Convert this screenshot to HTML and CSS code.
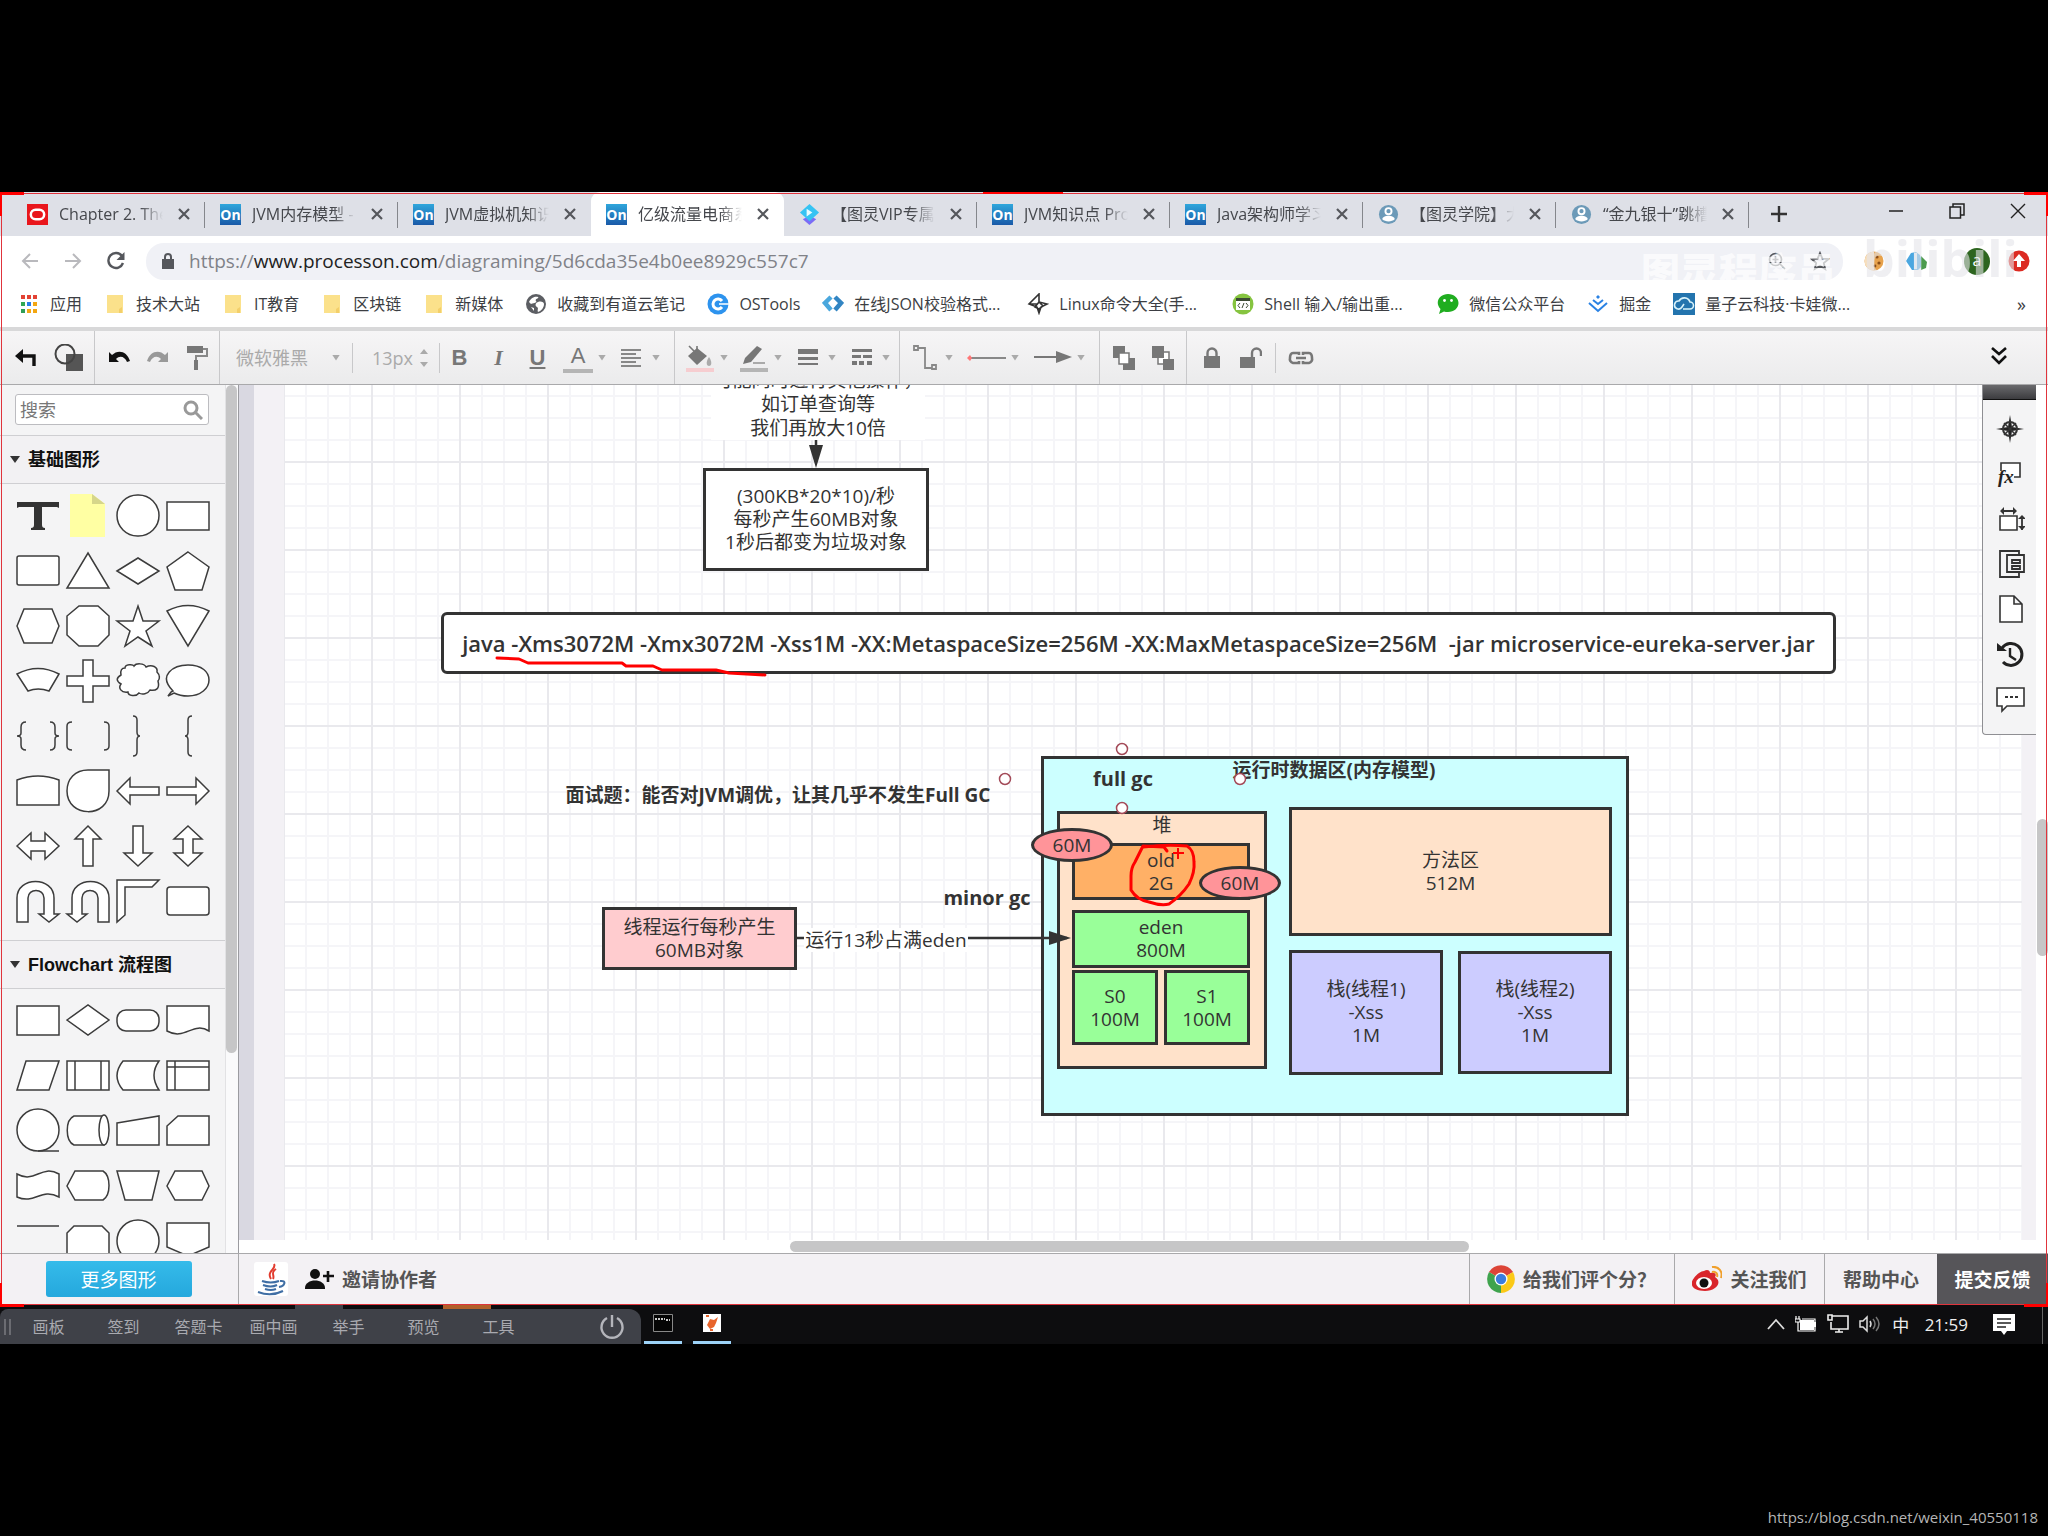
FILE: index.html
```html
<!DOCTYPE html>
<html lang="zh-CN">
<head>
<meta charset="utf-8">
<title>ProcessOn</title>
<link rel="stylesheet" href="styles.css">
</head>
<body>
<div class="desktop">
  <header class="tabs">
    <div class="tab sep"><svg class="fav" viewBox="0 0 22 22"><rect width="22" height="22" fill="#e9161c"/><rect x="4" y="6" width="14" height="10" rx="5" fill="none" stroke="#fff" stroke-width="2.6"/></svg><span class="title">Chapter 2. The</span><button class="x" aria-label="关闭"><svg width="14" height="14" viewBox="0 0 14 14"><path d="M2 2l10 10M12 2L2 12"/></svg></button></div>
    <div class="tab sep"><span class="fav on">On</span><span class="title">JVM内存模型 -</span><button class="x" aria-label="关闭"><svg width="14" height="14" viewBox="0 0 14 14"><path d="M2 2l10 10M12 2L2 12"/></svg></button></div>
    <div class="tab"><span class="fav on">On</span><span class="title">JVM虚拟机知识</span><button class="x" aria-label="关闭"><svg width="14" height="14" viewBox="0 0 14 14"><path d="M2 2l10 10M12 2L2 12"/></svg></button></div>
    <div class="tab active"><span class="fav on">On</span><span class="title">亿级流量电商系</span><button class="x" aria-label="关闭"><svg width="14" height="14" viewBox="0 0 14 14"><path d="M2 2l10 10M12 2L2 12"/></svg></button></div>
    <div class="tab sep"><svg class="fav" viewBox="0 0 22 22"><path d="M11 12l7 4-7 6-7-6z" fill="#7b6cf6"/><path d="M11 0l10 9-10 9L1 9z" fill="#35c3f3"/><path d="M8 5l6 4-6 4z" fill="#e8fbff"/></svg><span class="title">【图灵VIP专属</span><button class="x" aria-label="关闭"><svg width="14" height="14" viewBox="0 0 14 14"><path d="M2 2l10 10M12 2L2 12"/></svg></button></div>
    <div class="tab sep"><span class="fav on">On</span><span class="title">JVM知识点 Pro</span><button class="x" aria-label="关闭"><svg width="14" height="14" viewBox="0 0 14 14"><path d="M2 2l10 10M12 2L2 12"/></svg></button></div>
    <div class="tab sep"><span class="fav on">On</span><span class="title">Java架构师学习</span><button class="x" aria-label="关闭"><svg width="14" height="14" viewBox="0 0 14 14"><path d="M2 2l10 10M12 2L2 12"/></svg></button></div>
    <div class="tab sep"><svg class="fav" viewBox="0 0 22 22"><circle cx="11" cy="11" r="10" fill="#6c9ab8"/><circle cx="11" cy="7.500" r="3.200" fill="none" stroke="#fff" stroke-width="2"/><path d="M4.500 16c0-5 13-5 13 0-3 3-10 3-13 0z" fill="#fff"/></svg><span class="title">【图灵学院】大</span><button class="x" aria-label="关闭"><svg width="14" height="14" viewBox="0 0 14 14"><path d="M2 2l10 10M12 2L2 12"/></svg></button></div>
    <div class="tab sep"><svg class="fav" viewBox="0 0 22 22"><circle cx="11" cy="11" r="10" fill="#6c9ab8"/><circle cx="11" cy="7.500" r="3.200" fill="none" stroke="#fff" stroke-width="2"/><path d="M4.500 16c0-5 13-5 13 0-3 3-10 3-13 0z" fill="#fff"/></svg><span class="title">“金九银十”跳槽</span><button class="x" aria-label="关闭"><svg width="14" height="14" viewBox="0 0 14 14"><path d="M2 2l10 10M12 2L2 12"/></svg></button></div>
    <button class="plus" aria-label="新标签页"><svg width="18" height="18" viewBox="0 0 18 18"><path d="M9 1v16M1 9h16" stroke="#333" stroke-width="2.400"/></svg></button>
    <div class="winctl">
      <button aria-label="最小化"><svg width="16" height="16" viewBox="0 0 16 16"><path d="M1 8h14" stroke="#222" stroke-width="1.500"/></svg></button>
      <button aria-label="还原"><svg width="16" height="16" viewBox="0 0 16 16" fill="none" stroke="#222" stroke-width="1.500"><path d="M1 4h10.500v11H1zM4 4V1h11v11h-3"/></svg></button>
      <button aria-label="关闭窗口"><svg width="16" height="16" viewBox="0 0 16 16"><path d="M1 1l14 14M15 1L1 15" stroke="#222" stroke-width="1.400"/></svg></button>
    </div>
  </header>

  <nav class="address">
    <button class="nav" aria-label="后退"><svg width="18" height="18" viewBox="0 0 18 18" fill="none" stroke="#b9b9bd" stroke-width="2"><path d="M17 9H2M9 2L2 9l7 7"/></svg></button>
    <button class="nav" aria-label="前进"><svg width="18" height="18" viewBox="0 0 18 18" fill="none" stroke="#b9b9bd" stroke-width="2"><path d="M1 9h15M9 2l7 7-7 7"/></svg></button>
    <button class="nav" aria-label="刷新"><svg width="20" height="20" viewBox="0 0 20 20"><path d="M17 12a7.500 7.500 0 1 1-1-7" fill="none" stroke="#55575c" stroke-width="2.400"/><path d="M18.500 1v8h-8z" fill="#55575c"/></svg></button>
    <div class="pill">
      <svg width="12" height="16" viewBox="0 0 12 16"><path d="M0 6h12v10H0z" fill="#55575c"/><path d="M3 7V4a3 3 0 0 1 6 0v3" fill="none" stroke="#55575c" stroke-width="2"/></svg>
      <span class="url">https://<b>www.processon.com</b>/diagraming/5d6cda35e4b0ee8929c557c7</span>
      <svg class="mag" width="18" height="18" viewBox="0 0 18 18" fill="none" stroke="#55575c" stroke-width="1.700"><circle cx="7.500" cy="7.500" r="6"/><path d="M12 12l5 5M4.500 7.500h6M7.500 4.500v6"/></svg>
      <svg width="20" height="20" viewBox="0 0 20 20" fill="none" stroke="#55575c" stroke-width="1.800"><path d="M10 2l2.400 5.600 6 .5-4.600 4 1.400 6-5.200-3.200L4.800 18l1.400-6-4.600-4 6-.4z"/></svg>
      <span class="ghost">图灵程序员</span>
    </div>
    <div class="ext">
      <svg width="20" height="20" viewBox="0 0 20 20"><circle cx="10" cy="10" r="9.500" fill="#e7a24c"/><path d="M10 .5a9.500 9.500 0 0 0 0 19z" fill="#f7dfbd"/><circle cx="13" cy="6" r="1.600" fill="#8b4d16"/><circle cx="15" cy="12" r="1.600" fill="#8b4d16"/><circle cx="11" cy="15" r="1.400" fill="#8b4d16"/></svg>
      <svg width="22" height="20" viewBox="0 0 22 20"><path d="M0 10l5-8 5-1 4 3 3 10-5 5H6z" fill="#4ba7e0"/><path d="M8 2h3v16H8z" fill="#dff0fa"/><path d="M15 5l6 6-1 6-5 2z" fill="#4c9b4e"/></svg>
      <span class="avatar">a</span>
      <svg width="22" height="22" viewBox="0 0 22 22"><circle cx="11" cy="11" r="10.500" fill="#dc2a22"/><path d="M11 4l6 7h-4v6H9v-6H5z" fill="#fff"/></svg>
      <span class="bili">bilibili</span>
    </div>
  </nav>

  <nav class="marks">
    <a href="#"><svg width="22" height="22" viewBox="0 0 22 22"><path d="M3 2h4v4H3zM9 2h4v4H9zM15 2h4v4h-4z" fill="#e34234"/><path d="M3 9h4v4H3z" fill="#34a853"/><path d="M9 9h4v4H9z" fill="#2b7de9"/><path d="M15 9h4v4h-4zM9 16h4v4H9zM15 16h4v4h-4z" fill="#f3a712"/><path d="M3 16h4v4H3z" fill="#2f9e57"/></svg>应用</a>
    <a href="#"><svg width="22" height="22" viewBox="0 0 22 22"><path class="folder" d="M3 2h16v18H3z"/><path d="M15 20v-4l3-2v6z" fill="#f3cf6a"/></svg>技术大站</a>
    <a href="#"><svg width="22" height="22" viewBox="0 0 22 22"><path class="folder" d="M3 2h16v18H3z"/><path d="M15 20v-4l3-2v6z" fill="#f3cf6a"/></svg>IT教育</a>
    <a href="#"><svg width="22" height="22" viewBox="0 0 22 22"><path class="folder" d="M3 2h16v18H3z"/><path d="M15 20v-4l3-2v6z" fill="#f3cf6a"/></svg>区块链</a>
    <a href="#"><svg width="22" height="22" viewBox="0 0 22 22"><path class="folder" d="M3 2h16v18H3z"/><path d="M15 20v-4l3-2v6z" fill="#f3cf6a"/></svg>新媒体</a>
    <a href="#"><svg width="22" height="22" viewBox="0 0 22 22"><circle cx="11" cy="11" r="10" fill="#5c5e63"/><path d="M4 9c2-5 7-6 9-5s-4 2-2 4-4 2-5 3zM13 9c3-1 6 0 6 2 0 4-3 7-6 8-1-2 1-4-1-5s-2-4 1-5zM6 14l3 1v3z" fill="#fff"/></svg>收藏到有道云笔记</a>
    <a href="#"><svg width="22" height="22" viewBox="0 0 22 22"><circle cx="11" cy="11" r="10.500" fill="#2d93ee"/><path d="M15 8a5 5 0 1 0 0 6" fill="none" stroke="#fff" stroke-width="3"/><path d="M12 11h10" stroke="#fff" stroke-width="1.500"/></svg>OSTools</a>
    <a href="#"><svg width="22" height="22" viewBox="0 0 22 22" fill="none" stroke-width="4.500"><path d="M9 4l-6 6 6 7" stroke="#4aa7dd"/><path d="M13 4l6 6-6 7" stroke="#3285c3"/></svg><span class="long">在线JSON校验格式...</span></a>
    <a href="#"><svg width="22" height="22" viewBox="0 0 22 22" fill="none" stroke="#333" stroke-width="1.600"><path d="M12 1v8l8 2-6 3-2 6-2-6-8-3zM2 11h9M12 9l-4 5 4 2 4-3z"/></svg><span class="long">Linux命令大全(手...</span></a>
    <a href="#"><svg width="22" height="22" viewBox="0 0 22 22"><circle cx="11" cy="11" r="10.500" fill="#86c440"/><path d="M4 6h14v11H4z" fill="#fff"/><path d="M4 5h14v3H4z" fill="#3c4a34"/><path d="M8 10l-2 2.500L8 15M14 10l2 2.500-2 2.500M12 10l-2 5" stroke="#3c4a34" fill="none"/></svg><span class="long">Shell 输入/输出重...</span></a>
    <a href="#"><svg width="22" height="22" viewBox="0 0 22 22"><path d="M11 1c6 0 10.500 4 10.500 9S17 19 11 19c-1.500 0-3 0-4-.500L2 21l1.500-5C-3 9 3 1 11 1z" fill="#20ad20"/><circle cx="7.500" cy="7.500" r="1.400" fill="#fff"/><circle cx="14.500" cy="7.500" r="1.400" fill="#fff"/></svg>微信公众平台</a>
    <a href="#"><svg width="22" height="22" viewBox="0 0 22 22" fill="none" stroke="#2a82e4" stroke-width="2"><path d="M2 10l9 8 9-8M6 7l5 4 5-4"/><path d="M11 2l2 2-2 2-2-2z" fill="#2a82e4" stroke="none"/></svg>掘金</a>
    <a href="#"><svg width="22" height="22" viewBox="0 0 22 22"><path d="M0 0h22v22H0z" fill="#2374ae"/><path d="M10 16h7a3.500 3.500 0 0 0 0-7 6 6 0 0 0-11-1 4 4 0 1 0 3 6l2-3" fill="none" stroke="#d8f3fb" stroke-width="1.600"/></svg>量子云科技·卡娃微...</a>
    <button class="more" aria-label="更多书签">»</button>
  </nav>

  <div class="toolbar">
    <div class="group g1">
      <button aria-label="返回"><svg width="22" height="20" viewBox="0 0 22 20"><path d="M7 8h12v10" fill="none" stroke="#111" stroke-width="3.400"/><path d="M0 8l8-7v14z" fill="#111"/></svg></button>
      <button aria-label="图形"><svg width="30" height="28" viewBox="0 0 30 28"><path d="M12 10h17v17H12z" fill="#555"/><circle cx="11" cy="10" r="9.500" fill="none" stroke="#444" stroke-width="2"/></svg></button>
    </div>
    <div class="group g2">
      <button aria-label="撤销"><svg width="24" height="18" viewBox="0 0 24 18"><path d="M2 3v10h10L9 10c4-4 9-2 11 3l3-1C20 2 11 0 5 6z" fill="#111"/></svg></button>
      <button aria-label="重做"><svg width="24" height="18" viewBox="0 0 24 18"><path d="M22 3v10H12l3-3c-4-4-9-2-11 3l-3-1C4 2 13 0 19 6z" fill="#999"/></svg></button>
      <button aria-label="格式刷"><svg width="22" height="26" viewBox="0 0 22 26"><path d="M1 1h16v7H1z" fill="#777"/><path d="M17 4h4v7H10v5" fill="none" stroke="#888" stroke-width="2"/><path d="M8 15h4v10H8z" fill="#777"/></svg></button>
    </div>
    <div class="group g3">
      <span class="fontbox"><select aria-label="字体"><option>微软雅黑</option></select><i class="caret"></i></span>
      <span class="sizebox"><input type="text" value="13px" aria-label="字号"><svg width="8" height="20" viewBox="0 0 8 20"><path d="M4 1l4 5H0zM4 19l4-5H0z" fill="#aaa"/></svg></span>
      <button class="bold" aria-label="粗体">B</button>
      <button class="ital" aria-label="斜体">I</button>
      <button class="undl" aria-label="下划线">U</button>
      <button class="drop" aria-label="文字颜色"><span class="colour">A</span><i class="caret"></i></button>
      <button class="drop" aria-label="对齐"><svg width="30" height="30" viewBox="0 0 30 30" stroke="#888" stroke-width="2.200"><path d="M4 7h20M4 11h15M4 15h20M4 19h15M4 23h20"/></svg><i class="caret"></i></button>
    </div>
    <div class="group">
      <button class="drop" aria-label="填充"><svg width="30" height="30" viewBox="0 0 30 30"><path d="M3 13l9-8 10 8-10 9z" fill="#777"/><path d="M4 3l8 8V3" fill="none" stroke="#777" stroke-width="1.600"/><path d="M24 14c4 6 2 9 0 9s-4-3 0-9z" fill="#aaa"/><path d="M1 25h28v4H1z" fill="#f6cdd0"/></svg><i class="caret"></i></button>
      <button class="drop" aria-label="线条颜色"><svg width="30" height="30" viewBox="0 0 30 30"><path d="M4 21l2-6L18 3l5 3-11 13z" fill="#777"/><path d="M14 20h12" stroke="#aaa" stroke-width="2"/><path d="M1 25h28v4H1z" fill="#b5b5b5"/></svg><i class="caret"></i></button>
      <button class="drop" aria-label="线宽"><svg width="30" height="30" viewBox="0 0 30 30" fill="#777"><path d="M5 6h20v5H5zM5 14h20v3H5zM5 20h20v2H5z"/></svg><i class="caret"></i></button>
      <button class="drop" aria-label="线型"><svg width="30" height="30" viewBox="0 0 30 30" fill="#777"><path d="M5 6h20v3H5zM5 12h9v3H5zM16 12h9v3h-9zM5 18h5v4H5zM12 18h5v4h-5zM20 18h5v4h-5z"/></svg><i class="caret"></i></button>
    </div>
    <div class="group g5">
      <button class="drop" aria-label="连线类型"><svg width="30" height="30" viewBox="0 0 30 30" fill="none" stroke="#888" stroke-width="1.800"><path d="M4 3h4v4H4zM8 5h7v20h7M22 22h4v4h-4z"/></svg><i class="caret"></i></button>
      <button class="drop" aria-label="起点"><svg width="42" height="30" viewBox="0 0 42 30"><path d="M4 15h38" stroke="#888" stroke-width="2"/><path d="M3 15l3-3 2 3-2 3z" fill="#f77"/></svg><i class="caret"></i></button>
      <button class="drop" aria-label="终点"><svg width="42" height="30" viewBox="0 0 42 30"><path d="M4 14h26" stroke="#777" stroke-width="2"/><path d="M26 8l16 6-16 6z" fill="#777"/></svg><i class="caret"></i></button>
    </div>
    <div class="group">
      <button aria-label="置于顶层"><svg width="24" height="26" viewBox="0 0 24 26"><path d="M1 1h12v12H1zM11 13h12v12H11z" fill="#777"/><path d="M7 8h10v11H7z" fill="#fff" stroke="#777" stroke-width="1.500"/></svg></button>
      <button aria-label="置于底层"><svg width="24" height="26" viewBox="0 0 24 26"><path d="M7 7h11v12H7z" fill="#fff" stroke="#777" stroke-width="1.500"/><path d="M1 1h12v12H1zM12 14h11v11H12z" fill="#777"/></svg></button>
    </div>
    <div class="group last">
      <button aria-label="锁定"><svg width="16" height="22" viewBox="0 0 16 22"><path d="M0 9h16v12H0z" fill="#777"/><path d="M3.500 10V6a4.500 4.500 0 0 1 9 0v4" fill="none" stroke="#777" stroke-width="2.400"/></svg></button>
      <button aria-label="解锁"><svg width="22" height="22" viewBox="0 0 22 22"><path d="M0 10h15v11H0z" fill="#777"/><path d="M12 11V6a4.500 4.500 0 0 1 9 0v3" fill="none" stroke="#777" stroke-width="2.400"/></svg></button>
      <i class="bar"></i>
      <button aria-label="链接"><svg width="26" height="14" viewBox="0 0 26 14" fill="none" stroke="#777" stroke-width="2.600"><path d="M11 10v2H5a4 4 0 0 1-3-5c0-3 1-5 3-5h6v2M15 10v2h6a4 4 0 0 0 3-5c0-3-1-5-3-5h-6v2M8 7h10"/></svg></button>
    </div>
    <button class="fold" aria-label="收起"><svg width="16" height="18" viewBox="0 0 16 18" fill="none" stroke="#111" stroke-width="2.600"><path d="M1 1l7 6 7-6M1 9l7 7 7-7"/></svg></button>
  </div>

  <main class="editor">
    <aside class="side">
      <div class="shelf">
        <div class="search"><input type="text" placeholder="搜索" aria-label="搜索"><svg width="20" height="20" viewBox="0 0 20 20" fill="none" stroke="#999" stroke-width="3"><circle cx="8" cy="8" r="6"/><path d="M12 12l7 7"/></svg></div>
        <h2><i class="tri"></i>基础图形</h2>
        <div class="shapes">
          <svg viewBox="0 0 50 55"><path class="ink" d="M4 14h42v6l-2-1H29v18q0 3 3 3v2H18v-2q3 0 3-3V19H6l-2 1z"/></svg>
          <svg viewBox="0 0 50 55"><path d="M7 6h22l13 10v33H7z" fill="#ffffa3"/><path d="M29 6l13 10H29z" fill="#d6d68a"/></svg>
          <svg viewBox="0 0 50 55"><rect x="4" y="7" width="42" height="41" rx="20.500"/></svg>
          <svg viewBox="0 0 50 55"><path d="M4 14h42v28H4z"/></svg>

          <svg viewBox="0 0 50 55"><rect x="4" y="13" width="42" height="29" rx="2"/></svg>
          <svg viewBox="0 0 50 55"><path d="M25 10l21 35H4z"/></svg>
          <svg viewBox="0 0 50 55"><path d="M4 28l21-13 21 13-21 13z"/></svg>
          <svg viewBox="0 0 50 55"><path d="M25 9l21 15-7 23H12L4 24z"/></svg>

          <svg viewBox="0 0 50 55"><path d="M4 28l7-17h28l7 17-7 17H11z"/></svg>
          <svg viewBox="0 0 50 55"><path d="M16 8h19l11 10v19L35 48H16L4 37V18z"/></svg>
          <svg viewBox="0 0 50 55"><path d="M25 8l5 15h16L33 33l6 15-14-9-13 9 5-15L4 23h16z"/></svg>
          <svg viewBox="0 0 50 55"><path d="M4 13q21-11 42 0L25 48z"/></svg>

          <svg viewBox="0 0 50 55"><path d="M4 21q21-11 42 0L36 38q-11-4-21 0z"/></svg>
          <svg viewBox="0 0 50 55"><path d="M20 7h10v16h16v10H30v16H20V33H4V23h16z"/></svg>
          <svg viewBox="0 0 50 55"><path d="M12 15c0-4 8-4 9-2 2-3 10-3 12 1 6-3 12 0 11 5 3 3 3 7 1 9 2 8-2 10-8 9-2 4-8 5-11 3-3 4-11 3-11-1-7 1-10-4-7-8-5-3-5-6 0-9-1-5 1-7 4-7z"/></svg>
          <svg viewBox="0 0 50 55"><path d="M10 38C-6 22 11 12 25 12s21 7 21 15-8 16-21 16q-8 0-14-3l-6 3 3-4z"/></svg>

          <svg class="open" viewBox="0 0 50 55"><path d="M13 14q-5 0-5 5v6q0 3-4 3 4 0 4 3v6q0 5 5 5M37 14q5 0 5 5v6q0 3 4 3-4 0-4 3v6q0 5-5 5"/></svg>
          <svg class="open" viewBox="0 0 50 55"><path d="M9 14q-5 0-5 4v20q0 4 5 4M41 14q5 0 5 4v20q0 4-5 4"/></svg>
          <svg class="open" viewBox="0 0 50 55"><path d="M20 8q4 0 4 4v12q0 4 3 4-3 0-3 4v12q0 4-4 4"/></svg>
          <svg class="open" viewBox="0 0 50 55"><path d="M29 8q-4 0-4 4v12q0 4-3 4 3 0 3 4v12q0 4 4 4"/></svg>

          <svg viewBox="0 0 50 55"><path d="M4 42V17q21-8 42 0v25z"/></svg>
          <svg viewBox="0 0 50 55"><path d="M25 7h21v21c0 28-42 27-42 0C4 16 12 7 25 7z"/></svg>
          <svg viewBox="0 0 50 55"><path d="M4 28l13-13v9h29v8H17v9z"/></svg>
          <svg viewBox="0 0 50 55"><path d="M46 28L33 15v9H4v8h29v9z"/></svg>

          <svg viewBox="0 0 50 55"><path d="M4 28l14-13v8h14v-8l14 13-14 13v-8H18v8z"/></svg>
          <svg viewBox="0 0 50 55"><path d="M25 8l13 13h-8v27H20V21h-8z"/></svg>
          <svg viewBox="0 0 50 55"><path d="M25 48l14-13h-9V8H20v27h-9z"/></svg>
          <svg viewBox="0 0 50 55"><path d="M25 8l14 13h-9v14h9L25 48 11 35h9V21h-9z"/></svg>

          <svg viewBox="0 0 50 55"><path d="M4 49V25C4 3 41 3 41 25v16h5l-10 8-10-8h5V25c0-10-16-10-16 0v24z"/></svg>
          <svg viewBox="0 0 50 55"><path d="M46 49V25C46 3 9 3 9 25v16H4l10 8 10-8h-5V25c0-10 16-10 16 0v24z"/></svg>
          <svg viewBox="0 0 50 55"><path d="M4 7h42l-7 7H12v28l-8 7z"/></svg>
          <svg viewBox="0 0 50 55"><rect x="4" y="14" width="42" height="28" rx="3"/></svg>
        </div>
        <h2><i class="tri"></i>Flowchart 流程图</h2>
        <div class="shapes">
          <svg viewBox="0 0 50 55"><path d="M4 13h42v29H4z"/></svg>
          <svg viewBox="0 0 50 55"><path d="M4 27l21-15 21 15-21 15z"/></svg>
          <svg viewBox="0 0 50 55"><rect x="4" y="17" width="42" height="21" rx="9"/></svg>
          <svg viewBox="0 0 50 55"><path d="M4 13h42v25c-16-10-24 10-42 0z"/></svg>

          <svg viewBox="0 0 50 55"><path d="M13 13h33L36 42H4z"/></svg>
          <svg viewBox="0 0 50 55"><path d="M4 13h42v29H4zM12 13v29M38 13v29"/></svg>
          <svg viewBox="0 0 50 55"><path d="M10 13h36q-10 14 0 29H10Q-2 28 10 13z"/></svg>
          <svg viewBox="0 0 50 55"><path d="M4 13h42v29H4zM4 19h42M12 13v29"/></svg>

          <svg viewBox="0 0 50 55"><circle cx="25" cy="27" r="21"/><path d="M25 48h21"/></svg>
          <svg viewBox="0 0 50 55"><path d="M11 13h30c6 3 6 26 0 29H11C2 38 2 17 11 13z"/><ellipse cx="41" cy="27" rx="5" ry="15"/></svg>
          <svg viewBox="0 0 50 55"><path d="M4 20l42-7v29H4z"/></svg>
          <svg viewBox="0 0 50 55"><path d="M15 13h31v29H4V23z"/></svg>

          <svg viewBox="0 0 50 55"><path d="M4 16c18 10 24-10 42 0v23c-18-10-24 8-42 0z"/></svg>
          <svg viewBox="0 0 50 55"><path d="M12 13h28c8 5 8 24 0 29H12L4 28z"/></svg>
          <svg viewBox="0 0 50 55"><path d="M4 13h42l-7 29H12z"/></svg>
          <svg viewBox="0 0 50 55"><path d="M12 13h27l7 15-7 14H12L4 28z"/></svg>

          <svg viewBox="0 0 50 55"><path d="M4 13h42"/></svg>
          <svg viewBox="0 0 50 55"><path d="M11 13h28l7 7v28H4V20z"/></svg>
          <svg viewBox="0 0 50 55"><circle cx="25" cy="28" r="21"/></svg>
          <svg viewBox="0 0 50 55"><path d="M4 10h42v24L25 43 4 34z"/></svg>
        </div>
      </div>
      <div class="sidetrack"><i class="sidethumb"></i></div>
    </aside>

    <section class="work">
      <div class="sheet">
        <div class="board">
          <div class="note" style="left:427px;top:-17px;width:214px">可能同时进行其他操作，
如订单查询等
我们再放大10倍</div>
          <div class="node" style="left:419px;top:83px;width:226px;height:103px">(300KB*20*10)/秒
每秒产生60MB对象
1秒后都变为垃圾对象</div>
          <div class="node cmd" style="left:157px;top:227px;width:1395px;height:62px">java -Xms3072M -Xmx3072M -Xss1M -XX:MetaspaceSize=256M -XX:MaxMetaspaceSize=256M  -jar microservice-eureka-server.jar</div>
          <div class="label" style="left:277px;top:398px;width:434px">面试题：能否对JVM调优，让其几乎不发生Full GC</div>
          <div class="node cyan" style="left:757px;top:371px;width:588px;height:360px"></div>
          <div class="label" style="left:947px;top:373px;width:206px">运行时数据区(内存模型)</div>
          <div class="label big" style="left:799px;top:382px;width:80px">full gc</div>
          <div class="label big" style="left:655px;top:501px;width:96px">minor gc</div>
          <div class="node peach top" style="left:773px;top:426px;width:210px;height:258px">堆</div>
          <div class="node orange" style="left:788px;top:458px;width:178px;height:57px">old
2G</div>
          <div class="node green" style="left:788px;top:525px;width:178px;height:58px">eden
800M</div>
          <div class="node green" style="left:788px;top:585px;width:86px;height:75px">S0
100M</div>
          <div class="node green" style="left:880px;top:585px;width:86px;height:75px">S1
100M</div>
          <div class="node peach" style="left:1005px;top:422px;width:323px;height:129px">方法区
512M</div>
          <div class="node violet" style="left:1005px;top:565px;width:154px;height:125px">栈(线程1)
-Xss
1M</div>
          <div class="node violet" style="left:1174px;top:566px;width:154px;height:123px">栈(线程2)
-Xss
1M</div>
          <div class="node pink" style="left:318px;top:522px;width:195px;height:63px">线程运行每秒产生
60MB对象</div>
          <div class="node oval" style="left:747px;top:443px;width:82px;height:34px">60M</div>
          <div class="node oval" style="left:915px;top:481px;width:82px;height:34px">60M</div>
          <svg class="lines" width="1560" height="740" viewBox="0 0 1560 740">
            <path d="M532 55v10M513 553h270" stroke="#333" stroke-width="2.500"/>
            <path d="M525 60h14l-7 23zM765 546l22 7-22 7z" fill="#333"/>
          </svg>
          <div class="note" style="left:520px;top:543px;width:164px">运行13秒占满eden</div>
          <svg class="lines" width="1560" height="740" viewBox="0 0 1560 740" fill="none">
            <g fill="#fff" stroke="#a34a58" stroke-width="1.500"><circle cx="838" cy="364" r="5.500"/><circle cx="956" cy="394" r="5.500"/><circle cx="838" cy="423" r="5.500"/><circle cx="721" cy="394" r="5.500"/></g>
            <path class="pen" d="M213 273l22 1 9 4h94l4 3h27l9 4h54l13 3 36 2"/>
            <path class="pen" d="M883 466l-3-4-21-1-8 16q-4 6-4 14v14q6 10 18 12 12 4 20 2 12-8 20-20 6-12 5-22 0-12-7-16-20-2-44 1"/>
            <path d="M894 463v11M889 468h11" stroke="#f00" stroke-width="2"/>
          </svg>
        </div>
      </div>
      <div class="htrack"><i class="hthumb"></i></div>
      <i class="vthumb"></i>
      <div class="dock">
        <i class="grip"></i>
        <button aria-label="导航"><svg width="30" height="30" viewBox="0 0 30 30"><path d="M15 1l2 12 12 2-12 2-2 12-2-12-12-2 12-2z" fill="#222"/><circle cx="15" cy="15" r="7" fill="none" stroke="#333" stroke-width="2"/><path d="M9 9l12 12M21 9L9 21" stroke="#333" stroke-width="1.500"/></svg></button>
        <button aria-label="公式"><svg width="30" height="30" viewBox="0 0 30 30"><path d="M6 12V4h19v14h-6" fill="#fff" stroke="#333" stroke-width="1.600"/><text class="fx" x="3" y="24">fx</text></svg></button>
        <button aria-label="尺寸"><svg width="30" height="30" viewBox="0 0 30 30"><path d="M5 12h17v14H5z" fill="#fff" stroke="#333" stroke-width="1.600"/><path d="M6 7h15M27 12v14" stroke="#333" stroke-width="1.800"/><path d="M9 3v8L5 7zM18 3v8l4-4zM23 15h8l-4-4zM23 22h8l-4 4z" fill="#333"/></svg></button>
        <button aria-label="页面"><svg width="30" height="30" viewBox="0 0 30 30" fill="none" stroke="#333" stroke-width="1.800"><path d="M24 6V2H5v26h19v-4"/><path d="M12 6h17v17H12zM17 11h8v3h-8zM17 17h8v3h-8z"/></svg></button>
        <button aria-label="文档"><svg width="30" height="30" viewBox="0 0 30 30" fill="#fff" stroke="#333" stroke-width="1.600"><path d="M5 2h14l8 8v18H5zM19 2v8h8"/></svg></button>
        <button aria-label="历史"><svg width="30" height="30" viewBox="0 0 30 30" fill="none"><path d="M7 9a11 11 0 1 1 1 14" stroke="#222" stroke-width="3"/><path d="M2 4l10 8H2z" fill="#222"/><path d="M15 9v8l6 4" stroke="#222" stroke-width="2.400"/></svg></button>
        <button aria-label="评论"><svg width="30" height="30" viewBox="0 0 30 30"><path d="M2 4h27v18H12l-5 5v-5H2z" fill="#fff" stroke="#333" stroke-width="1.600"/><path d="M10 13h3M15 13h3M20 13h3" stroke="#333" stroke-width="2"/></svg></button>
      </div>
    </section>
  </main>

  <footer class="status">
    <div class="morebox"><button class="moreshapes">更多图形</button></div>
    <svg class="cup" width="34" height="34" viewBox="0 0 34 34" fill="none"><rect width="34" height="34" rx="3" fill="#fff"/><path d="M20 2c3 5-8 7-3 15M22 7c-6 4-1 6-3 10" stroke="#e23b2e" stroke-width="2"/><path d="M8 19q9 3 17 0M9 23q8 3 14 0M11 27q6 2 11 0M4 30q13 5 25-1M26 19c7-1 5 5-1 6" stroke="#3f6ea4" stroke-width="2"/></svg>
    <button class="invite"><svg width="30" height="22" viewBox="0 0 30 22"><circle cx="10" cy="6" r="5" fill="#111"/><path d="M0 20c0-10 20-10 20 0v1H0z" fill="#111"/><path d="M23 3v11M18 8h11" stroke="#111" stroke-width="2.600"/></svg>邀请协作者</button>
    <div class="links">
      <a href="#" class="l1"><svg width="28" height="28" viewBox="0 0 28 28"><path d="M14 14L2 7a14 14 0 0 1 24 0z" fill="#dc4437"/><path d="M14 14L26 7a14 14 0 0 1-12 21z" fill="#fbc916"/><path d="M14 14v14A14 14 0 0 1 2 7z" fill="#3fa34d"/><circle cx="14" cy="14" r="6.500" fill="#fff"/><circle cx="14" cy="14" r="5.200" fill="#3b7ddd"/></svg>给我们评个分？</a>
      <a href="#" class="l2"><svg width="30" height="26" viewBox="0 0 30 26"><path d="M12 5c3-2 6-1 6 2 5-1 7 1 5 4 8 5 1 14-10 14C0 25-3 18 2 12c3-4 7-7 10-7z" fill="#d9252b"/><ellipse cx="12" cy="17" rx="8" ry="6" fill="#fff"/><circle cx="12" cy="17" r="4.500" fill="#111"/><path d="M20 6c4-1 6 2 5 5M20 1c7-1 11 5 9 11" fill="none" stroke="#f0a02c" stroke-width="2"/></svg>关注我们</a>
      <a href="#" class="l3">帮助中心</a>
      <a href="#" class="l4">提交反馈</a>
    </div>
  </footer>

  <div class="taskbar">
    <div class="class-tools">
      <i class="handle"></i>
      <button>画板</button><button>签到</button><button>答题卡</button><button>画中画</button><button>举手</button><button>预览</button><button>工具</button>
      <button class="power" aria-label="退出"><svg width="26" height="26" viewBox="0 0 26 26" fill="none" stroke="#b4b5bb" stroke-width="2.400"><path d="M8 4a10.500 10.500 0 1 0 10 0M13 1v12"/></svg></button>
    </div>
    <button class="app" aria-label="终端"><svg width="20" height="18" viewBox="0 0 20 18"><path d="M.5.500h19v17H.5z" fill="#050505" stroke="#888"/><path d="M2 5h10M13 6h4" stroke="#ccc" stroke-width="2" stroke-dasharray="2 1"/></svg></button>
    <button class="app" aria-label="课堂"><svg width="18" height="18" viewBox="0 0 18 18"><path d="M0 0h18v18H0z" fill="#fff"/><path d="M7 5l4 1 4-3-2 6-2 4-4 2-3-4z" fill="#e8642b"/><path d="M3 1h3v2H3zM7 15h3v2H7z" fill="#e8642b"/></svg></button>
    <div class="tray">
      <svg width="18" height="12" viewBox="0 0 18 12" fill="none" stroke="#ddd" stroke-width="1.800"><path d="M1 11l8-9 8 9"/></svg>
      <svg width="22" height="18" viewBox="0 0 22 18"><path d="M5 5h14v2h2v5h-2v3H5z" fill="#fff"/><path d="M1 1v3M4 1v3M0 4h5v3H0zM3 7v9h17V4H7" fill="none" stroke="#fff" stroke-width="1.200"/></svg>
      <svg width="22" height="20" viewBox="0 0 22 20" fill="none" stroke="#eee" stroke-width="1.600"><path d="M5 2h16v13H4V8M12 15v3M8 18h8M1 1h4v5H1z"/></svg>
      <svg width="22" height="18" viewBox="0 0 22 18" fill="none" stroke="#ddd" stroke-width="1.500"><path d="M1 6h3l4-4v14l-4-4H1zM11 6q2 3 0 6"/><path d="M14 4q4 5 0 10M17 2q6 7 0 14" stroke="#777"/></svg>
      <span class="ime">中</span>
      <span class="clock">21:59</span>
      <svg width="22" height="22" viewBox="0 0 22 22"><path d="M0 1h22v17h-8l-3 4-3-4H0z" fill="#fff"/><path d="M4 6h14M4 10h14M4 14h9" stroke="#222" stroke-width="1.600"/></svg>
    </div>
    <i class="nub grey"></i><i class="nub amber"></i>
  </div>
  <div class="frame"><i class="c tl"></i><i class="c tr"></i><i class="c bl"></i><i class="c br"></i><i class="mid"></i></div>
</div>
<div class="credit">https://blog.csdn.net/weixin_40550118</div>
</body>
</html>
```
FILE: styles.css
```css
* { box-sizing: border-box; }
body {
  margin: 0;
  height: 100vh;
  padding: 12.5vh 0;
  background: #000;
  position: relative;
  display: flex;
  flex-direction: column;
  font-family: "Open Sans", "Noto Sans CJK SC", sans-serif;
  font-size: 16px;
  color: #333;
}
button, input, select { font: inherit; color: inherit; background: none; border: 0; margin: 0; padding: 0; }
a { color: inherit; text-decoration: none; }
svg { flex: none; display: block; }
i { font-style: normal; flex: none; }

.desktop { flex: 1; display: flex; flex-direction: column; position: relative; background: #fff; min-height: 0; }

/* browser tabs */
.tabs { display: flex; height: 44px; padding-left: 12px; background: #dee0e7; }
.tab { width: 193px; height: 44px; display: flex; align-items: center; padding: 0 14px 0 15px; position: relative; }
.tab.sep::after { content: ""; position: absolute; right: 0; top: 10px; width: 1px; height: 26px; background: #85878c; }
.tab.active { background: #fff; border-radius: 9px 9px 0 0; }
.fav { width: 21px; height: 21px; margin-right: 11px; flex: none; }
.fav.on { background: linear-gradient(#2fa6dc, #1a5aa8); color: #fff; font: bold 14px/21px "Open Sans", sans-serif; text-align: center; }
.title { flex: 1; min-width: 0; overflow: hidden; white-space: nowrap; color: #45474c; line-height: 24px; -webkit-mask-image: linear-gradient(90deg, #000 78%, transparent); mask-image: linear-gradient(90deg, #000 78%, transparent); }
.x { margin-left: 14px; }
.x path { stroke: #55575c; stroke-width: 2.2; }
.plus { width: 60px; display: flex; align-items: center; justify-content: center; }
.winctl { margin-left: auto; display: flex; align-items: center; padding-bottom: 6px; }
.winctl button { width: 61px; display: flex; justify-content: center; }

/* address row */
.address { display: flex; align-items: center; height: 50px; padding: 0 18px 0 8px; }
.nav { width: 43px; display: flex; justify-content: center; }
.pill { flex: 1; height: 37px; margin-left: 9px; padding: 0 13px 0 16px; border-radius: 18px; background: #f0f1f6; display: flex; align-items: center; position: relative; overflow: hidden; }
.url { margin-left: 15px; font-size: 19px; color: #808288; white-space: nowrap; }
.url b { font-weight: 400; color: #222; }
.mag { margin: 0 24px 0 auto; }
.ghost { position: absolute; right: 7px; top: 7px; font: 900 39px/39px "Noto Sans CJK SC", sans-serif; color: rgba(255, 255, 255, .7); }
.ext { width: 187px; padding-left: 21px; display: flex; align-items: center; gap: 22px; position: relative; }
.avatar { width: 27px; height: 27px; margin-left: 14px; border-radius: 50%; background: #2d651f; color: #fff; text-align: center; line-height: 24px; }
.ext > svg:nth-of-type(3) { margin-left: -4px; }
.bili { position: absolute; left: 20px; top: -26px; font: bold 50px/72px "Open Sans", sans-serif; color: rgba(228, 228, 234, .6); }

/* bookmarks */
.marks { display: flex; align-items: center; gap: 22px; height: 45px; padding: 0 22px 5px 18px; color: #3c3e43; border-bottom: 4px solid #d8d8d9; white-space: nowrap; }
.marks a { display: flex; align-items: center; gap: 10px; line-height: 24px; }
.long { width: 151px; }
.folder { fill: #fbe18b; }
.more { margin-left: auto; font-size: 18px; line-height: 24px; }

/* editor toolbar */
.toolbar { display: flex; height: 54px; background: linear-gradient(#f6f5f6, #ebebec); border-bottom: 1px solid #a9a9ab; }
.group { display: flex; align-items: center; padding: 0 4px; border-right: 1px solid #c8c8ca; }
.group.last { border: 0; padding-left: 5px; }
.group button { width: 39px; height: 40px; display: flex; align-items: center; justify-content: center; }
.group.g1 button { width: 43px; }
.group.g2 button { width: 39px; }
.group.g2 { padding: 0 3px 0 4px; }
.group.g3 { padding: 0 9px 0 0; }
.group.g5 { padding-right: 9px; }
.group .drop { width: auto; padding: 0 5px 0 6px; gap: 5px; }
.caret { width: 8px; height: 6px; background: #aaa; clip-path: polygon(0 0, 100% 0, 50% 100%); }
.fontbox, .sizebox { display: flex; align-items: center; height: 30px; border-right: 1px solid #c8c8ca; color: #aaa; font-size: 18px; }
.fontbox { width: 133px; padding: 0 12px 0 16px; justify-content: space-between; }
.fontbox select { appearance: none; width: 90px; }
.sizebox { width: 87px; padding: 0 11px 0 19px; justify-content: space-between; }
.sizebox input { width: 44px; }
.bold, .ital, .undl, .colour { font: bold 22px/28px "Liberation Sans", sans-serif; color: #777; }
.ital { font-family: "Liberation Serif", serif; font-style: italic; }
.undl { text-decoration: underline; }
.colour { width: 30px; height: 30px; line-height: 26px; border-bottom: 4px solid #b5b5b5; font-weight: 400; }
.bar { width: 1px; height: 30px; background: #c8c8ca; margin: 0 5px; }
.fold { margin: 0 41px 4px auto; display: flex; align-items: center; }

/* editor body */
.editor { flex: 1; min-height: 0; display: flex; }
.side { width: 239px; display: flex; border-right: 1px solid #9b9ba0; background: #f4f4f5; }
.shelf { flex: 1; overflow: hidden; border-right: 1px solid #e2e2e4; }
.search { display: flex; align-items: center; height: 31px; margin: 9px 16px 10px 15px; padding: 0 5px 0 4px; background: #fff; border: 1px solid #bcbcc0; border-radius: 3px; }
.search input { flex: 1; min-width: 0; font-size: 18px; outline: 0; }
.search input::placeholder { color: #777; }
.shelf h2 { margin: 0; height: 49px; display: flex; align-items: center; gap: 8px; padding-left: 10px; background: #f2f1f3; border: solid #cfcfd2; border-width: 1px 0; font: bold 18px/24px "Liberation Sans", "Noto Sans CJK SC", sans-serif; color: #111; }
.tri { width: 10px; height: 7px; background: #333; clip-path: polygon(0 0, 100% 0, 50% 100%); }
.shapes { display: grid; grid-template-columns: repeat(4, 50px); grid-auto-rows: 55px; padding: 4px 0 12px 13px; }
.shapes svg { width: 50px; height: 55px; fill: #fff; stroke: #3c3c3c; stroke-width: 1.5; }
.shapes .ink { fill: #333; stroke: none; }
.shapes path[fill] { stroke: none; }
.shapes .open { fill: none; }
.sidetrack { width: 12px; background: #fafafb; }
.sidethumb { display: block; width: 11px; height: 77%; background: #c6c6c7; border-radius: 6px; }

.work { flex: 1; min-width: 0; display: flex; flex-direction: column; position: relative; }
.sheet { flex: 1; min-height: 0; display: flex; overflow: hidden; margin-right: 12px; border-left: 15px solid #d9d8e1; padding: 0 14px 0 30px; background: #f3f1f5; }
.board {
  flex: 1; position: relative; overflow: hidden;
  background-color: #fff;
  background-image: linear-gradient(90deg, #e9e9ed 2px, transparent 2px), linear-gradient(#e9e9ed 2px, transparent 2px), linear-gradient(90deg, #f5f5f8 2px, transparent 2px), linear-gradient(#f5f5f8 2px, transparent 2px);
  background-size: 88px 88px, 88px 88px, 22px 22px, 22px 22px;
  background-position: -1px -12px;
}
.node, .note, .label, .lines { position: absolute; white-space: pre; }
.node { display: flex; align-items: center; justify-content: center; text-align: center; border: 3px solid #333; background: #fff; font-size: 19px; line-height: 23px; }
.cmd { border-radius: 6px; font-weight: 600; font-size: 22px; }
.note { background: #fff; text-align: center; font-size: 19px; line-height: 24px; }
.label { font-size: 19px; line-height: 24px; font-weight: 700; text-align: center; }
.label.big { font-size: 20px; }
.cyan { background: #cff; }
.peach { background: #ffe2ca; }
.peach.top { align-items: flex-start; }
.orange { background: #ffb066; }
.green { background: #9f9; }
.violet { background: #ccf; }
.pink { background: #ffcccf; }
.oval { background: #ff9499; border-radius: 50%; }
.lines { left: 0; top: 0; }
.pen { stroke: #f00; stroke-width: 3; stroke-linejoin: round; stroke-linecap: round; }
.htrack { height: 13px; background: #fff; padding: 1px 0 0 551px; }
.hthumb { display: block; width: 54%; height: 11px; border-radius: 6px; background: #c6c6c7; }
.vthumb { position: absolute; right: 0; top: 50%; width: 11px; height: 137px; border-radius: 6px; background: #c6c6c7; }
.dock { position: absolute; right: 12px; top: 0; width: 54px; padding-bottom: 13px; background: #f4f4f5; border: solid #8f8f93; border-width: 0 0 1px 1px; border-radius: 0 0 0 4px; display: flex; flex-direction: column; align-items: center; }
.dock button { height: 45px; display: flex; align-items: center; }
.grip { width: 100%; height: 15px; margin-bottom: 6px; background: linear-gradient(#6a6a6d, #3c3c3f); border-bottom: 1px solid #111; }
.fx { font: italic bold 19px "Liberation Serif", serif; fill: #222; }

/* status bar */
.status { display: flex; align-items: center; height: 51px; background: #f3f1f4; border-top: 1px solid #a9a9ab; font-size: 19px; font-weight: 700; color: #555; }
.morebox { width: 239px; height: 50px; padding-right: 1px; display: flex; align-items: center; justify-content: center; border-right: 1px solid #a9a9ab; }
.moreshapes { width: 146px; height: 36px; border-radius: 3px; background: linear-gradient(#35bbea, #25a8dd); color: #fff; font-weight: 400; }
.cup { margin: 0 17px 0 15px; }
.invite { display: flex; align-items: center; gap: 7px; }
.links { margin-left: auto; display: flex; align-self: stretch; }
.links a { display: flex; align-items: center; justify-content: center; gap: 8px; border-left: 1px solid #a9a9ab; }
.l1 { width: 205px; }
.links .l1 { justify-content: flex-start; padding-left: 17px; }
.l2 { width: 150px; }
.l3 { width: 113px; }
.links .l4 { width: 111px; background: #565559; color: #fff; border: 0; }

/* system taskbar */
.taskbar { display: flex; height: 40px; background: #0d0d0f; position: relative; }
.class-tools { width: 641px; margin-top: 5px; padding-right: 16px; display: flex; align-items: center; background: #3f4148; border-radius: 8px 12px 0 0; color: #a9aab0; }
.class-tools button { width: 75px; line-height: 24px; white-space: nowrap; }
.handle { width: 7px; height: 16px; margin-left: 4px; border: solid #6b6c72; border-width: 0 2px; }
.class-tools .power { width: 26px; height: 26px; margin-left: auto; }
.app { width: 38px; margin-left: 3px; margin-right: 8px; display: flex; align-items: center; justify-content: center; border-bottom: 3px solid #9cd2f7; }
.tray { margin-left: auto; padding: 0 27px 0 0; display: flex; align-items: center; gap: 10px; color: #eee; border-right: 1px solid #666; margin-right: 5px; font-size: 17px; }
.ime { width: 20px; text-align: center; }
.clock { margin: 0 15px 0 4px; }
.nub { position: absolute; top: 1px; width: 48px; height: 4px; }
.grey { left: 295px; background: #3f4148; }
.amber { left: 443px; background: #b2602a; }

/* recording frame */
.frame { position: absolute; inset: 1px 1px 39px 1px; border: 1px solid #e0343c; pointer-events: none; }
.c, .mid { position: absolute; background: #f00; }
.c { width: 24px; height: 3px; }
.c::after { content: ""; position: absolute; left: 0; bottom: 0; width: 2px; height: 24px; background: #f00; }
.tl { left: -2px; top: -2px; }
.tl::after { top: 0; bottom: auto; }
.tr { right: -2px; top: -2px; }
.tr::after { left: auto; right: 0; top: 0; bottom: auto; }
.bl { left: -2px; bottom: -3px; }
.br { right: -2px; bottom: -3px; }
.br::after { left: auto; right: 0; }
.mid { left: 48%; top: -2px; width: 80px; height: 2px; }

.credit { position: absolute; right: 10px; bottom: 8px; color: #b5b5b5; font-size: 15px; line-height: 22px; }
```
